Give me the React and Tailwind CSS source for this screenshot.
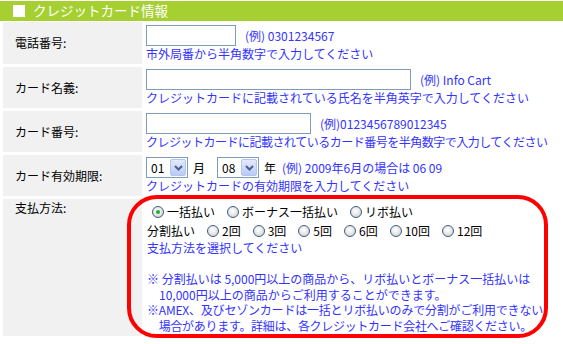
import React from "react";

const Radio = ({ checked }) => (
  <span className="inline-flex w-[12px] h-[12px] shrink-0 items-center justify-center rounded-full border border-[#3d5d86] bg-[radial-gradient(circle_at_45%_40%,#ffffff_0%,#e9e9e9_45%,#c4c4c4_100%)]">
    {checked && <span className="block w-[4px] h-[4px] rounded-full bg-[#22b022]" />}
  </span>
);

const Select = ({ value }) => (
  <div className="flex w-[42px] h-[21px] shrink-0 items-center justify-between border border-[#7f9db9] bg-white">
    <span className="pl-[4px] text-black leading-none">{value}</span>
    <span className="mr-[1px] flex w-[16px] h-[17px] items-center justify-center rounded-[2px] border border-[#b3c5ee] bg-[linear-gradient(#e3eafd,#b9cbf6)]">
      <svg width="9" height="6" viewBox="0 0 9 6">
        <path d="M1 1 L4.5 4.5 L8 1" fill="none" stroke="#4b6089" strokeWidth="2" />
      </svg>
    </span>
  </div>
);

const Label = ({ children, top }) => (
  <div
    className={
      "w-[139px] shrink-0 bg-[#f1f1f1] pl-[12px] text-black flex " +
      (top ? "items-start pt-[1px]" : "items-center")
    }
  >
    <span className="leading-[16px] whitespace-nowrap">{children}</span>
  </div>
);

const Opt = ({ checked, children, first }) => (
  <span className={"inline-flex items-center whitespace-nowrap " + (first ? "ml-[6px]" : "ml-[12px]")}>
    <Radio checked={checked} />
    <span className="ml-[3px] text-black">{children}</span>
  </span>
);

export default function App() {
  const blue = "whitespace-nowrap text-[#3333ff]";
  return (
    <div className="relative w-[563px] h-[344px] overflow-hidden bg-white text-[12px] font-['Noto_Sans_CJK_JP','Noto_Sans',sans-serif]">
      <div className="mt-[1px] flex h-[20px] items-center bg-[#a6d032] pl-[13px]">
        <span className="block w-[12px] h-[12px] bg-white" />
        <span className="ml-[8px] text-[13.5px] leading-none text-white whitespace-nowrap">クレジットカード情報</span>
      </div>

      <div className="mt-[1px] flex flex-col gap-[3px] pl-[3px]">
        <div className="flex h-[42px]">
          <Label>電話番号:</Label>
          <div className="flex min-w-0 flex-col pl-[4px] pt-[3px]">
            <div className="flex items-center">
              <div className="w-[90px] h-[21px] shrink-0 border border-[#7f9db9] bg-white" />
              <span className={"ml-[9px] " + blue}>(例) 0301234567</span>
            </div>
            <span className={"leading-[16px] " + blue}>市外局番から半角数字で入力してください</span>
          </div>
        </div>

        <div className="flex h-[41px]">
          <Label>カード名義:</Label>
          <div className="flex min-w-0 flex-col pl-[4px] pt-[2px]">
            <div className="flex items-center">
              <div className="w-[265px] h-[21px] shrink-0 border border-[#7f9db9] bg-white" />
              <span className={"ml-[9px] " + blue}>(例) Info Cart</span>
            </div>
            <span className={"leading-[16px] " + blue}>クレジットカードに記載されている氏名を半角英字で入力してください</span>
          </div>
        </div>

        <div className="flex h-[41px]">
          <Label>カード番号:</Label>
          <div className="flex min-w-0 flex-col pl-[4px] pt-[2px]">
            <div className="flex items-center">
              <div className="w-[165px] h-[21px] shrink-0 border border-[#7f9db9] bg-white" />
              <span className={"ml-[9px] " + blue}>(例)0123456789012345</span>
            </div>
            <span className={"leading-[16px] tracking-[-0.5px] " + blue}>クレジットカードに記載されているカード番号を半角数字で入力してください</span>
          </div>
        </div>

        <div className="flex h-[41px]">
          <Label>カード有効期限:</Label>
          <div className="flex min-w-0 flex-col pl-[4px] pt-[2px]">
            <div className="flex items-center">
              <Select value="01" />
              <span className="ml-[5px] text-black">月</span>
              <span className="ml-[12px]">
                <Select value="08" />
              </span>
              <span className="ml-[5px] text-black">年</span>
              <span className={"ml-[6px] " + blue}>(例) 2009年6月の場合は 06 09</span>
            </div>
            <span className={"leading-[16px] " + blue}>クレジットカードの有効期限を入力してください</span>
          </div>
        </div>

        <div className="flex h-[137px]">
          <Label top>支払方法:</Label>
          <div className="flex min-w-0 flex-col pl-[4px] pt-[3px]">
            <div className="flex h-[20px] items-center">
              <Opt first checked>一括払い</Opt>
              <Opt>ボーナス一括払い</Opt>
              <Opt>リボ払い</Opt>
            </div>
            <div className="flex h-[18px] items-center">
              <span className="ml-[1px] text-black whitespace-nowrap">分割払い</span>
              <Opt>2回</Opt>
              <Opt>3回</Opt>
              <Opt>5回</Opt>
              <Opt>6回</Opt>
              <Opt>10回</Opt>
              <Opt>12回</Opt>
            </div>
            <div className={"ml-[1px] whitespace-pre leading-[15.5px] " + blue}>
              <div>支払方法を選択してください</div>
              <div>&nbsp;</div>
              <div>※ 分割払いは 5,000円以上の商品から、リボ払いとボーナス一括払いは</div>
              <div>{"　10,000円以上の商品からご利用することができます。"}</div>
              <div className="tracking-[-0.2px]">※AMEX、及びセゾンカードは一括とリボ払いのみで分割がご利用できない</div>
              <div className="tracking-[-0.3px]">{"　場合があります。詳細は、各クレジットカード会社へご確認ください。"}</div>
            </div>
          </div>
        </div>
      </div>

      <div className="pointer-events-none absolute left-[127px] top-[195px] w-[421px] h-[143px] rounded-[30px] border-[4px] border-[#ff0000]" />
    </div>
  );
}
